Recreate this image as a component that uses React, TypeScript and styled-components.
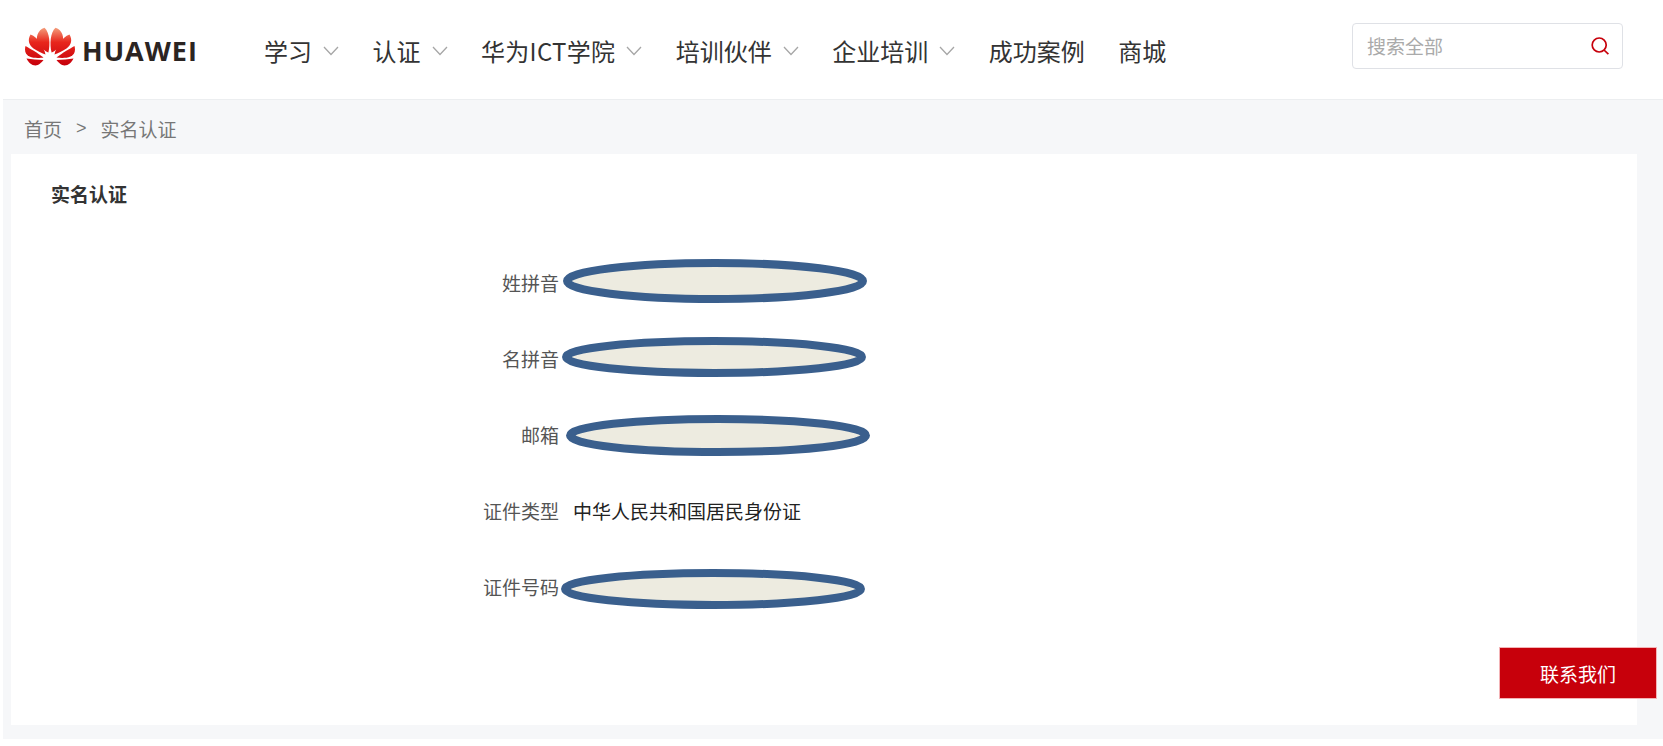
import styled, { createGlobalStyle } from "styled-components";

const GlobalStyle = createGlobalStyle`
  html, body {
    margin: 0;
    padding: 0;
    background: #fff;
    font-family: "Noto Sans CJK SC", "Liberation Sans", sans-serif;
  }
  * { box-sizing: border-box; }
`;

const navItems = [
  { label: "学习", arrow: true },
  { label: "认证", arrow: true },
  { label: "华为ICT学院", arrow: true, spacing: 0.3 },
  { label: "培训伙伴", arrow: true },
  { label: "企业培训", arrow: true },
  { label: "成功案例", arrow: false },
  { label: "商城", arrow: false },
];

const formRows = [
  { label: "姓拼音", blot: { left: 552, top: 15, width: 304, height: 44 } },
  { label: "名拼音", blot: { left: 551, top: 17, width: 304, height: 40 } },
  { label: "邮箱", blot: { left: 555, top: 19, width: 304, height: 41 } },
  { label: "证件类型", value: "中华人民共和国居民身份证" },
  { label: "证件号码", blot: { left: 550, top: 21, width: 304, height: 40 } },
];

const petals = [
  "M26.6 25.5C24.6 17 25.2 5.5 30.5 0.8C37.5 3 39.5 11 37.2 15.5C35.2 19.6 29.5 24.6 26.6 25.5Z",
  "M29.5 27.5C31 20 37 10 44.5 7.5C47.5 12.5 46.5 18 41.5 21.5C38 24 32.5 26.5 29.5 27.5Z",
  "M31.5 30.5C38 25.5 45 21.5 49.5 19C50.8 24 49.5 27.5 45.5 29.5C41 31.5 35 31 31.5 30.5Z",
  "M31.5 33C37 32.5 43.5 32.5 48.5 31.5C46.5 35.5 43.5 38.5 39.5 38.5C36.5 38.5 33.5 35.5 31.5 33Z",
];

function Logo() {
  return (
    <LogoMark width="50" height="39" viewBox="0 0 50 39">
      <defs>
        <linearGradient id="petal" gradientUnits="userSpaceOnUse" x1="0" y1="38" x2="0" y2="0">
          <stop offset="0" stopColor="#c7000b" />
          <stop offset="0.6" stopColor="#e8261c" />
          <stop offset="1" stopColor="#f4a37f" />
        </linearGradient>
      </defs>
      {petals.map((d) => (
        <path key={d} d={d} fill="url(#petal)" />
      ))}
      <g transform="translate(50 0) scale(-1 1)">
        {petals.map((d) => (
          <path key={d} d={d} fill="url(#petal)" />
        ))}
      </g>
    </LogoMark>
  );
}

function Chevron() {
  return (
    <svg width="16" height="10" viewBox="0 0 16 10">
      <path d="M1 1L8 8.5L15 1" fill="none" stroke="#a6a6a6" strokeWidth="1.3" />
    </svg>
  );
}

function SearchIcon() {
  return (
    <svg width="20" height="20" viewBox="0 0 20 20">
      <circle cx="9.2" cy="9" r="7" fill="none" stroke="#c7000b" strokeWidth="1.7" />
      <path d="M14 14L18.4 18.2" fill="none" stroke="#c7000b" strokeWidth="1.7" />
    </svg>
  );
}

export default function App() {
  return (
    <>
      <GlobalStyle />
      <Page>
        <Header>
          <Brand>
            <Logo />
            <BrandName>HUAWEI</BrandName>
          </Brand>
          <Nav>
            {navItems.map((item) => (
              <NavItem key={item.label} $spacing={item.spacing ?? 0}>
                {item.label}
                {item.arrow && <Chevron />}
              </NavItem>
            ))}
          </Nav>
          <SearchBox>
            <SearchText>搜索全部</SearchText>
            <SearchIcon />
          </SearchBox>
        </Header>
        <Content>
          <Breadcrumb>
            <span>首页</span>
            <Separator>&gt;</Separator>
            <span>实名认证</span>
          </Breadcrumb>
          <Card>
            <CardTitle>实名认证</CardTitle>
            <Form>
              {formRows.map((row) => (
                <Row key={row.label}>
                  <Label>{row.label}</Label>
                  {row.value && <Value>{row.value}</Value>}
                  {row.blot && (
                    <Blot
                      $left={row.blot.left}
                      $top={row.blot.top}
                      width={row.blot.width}
                      height={row.blot.height}
                      viewBox={`0 0 ${row.blot.width} ${row.blot.height}`}
                    >
                      <ellipse
                        cx={row.blot.width / 2}
                        cy={row.blot.height / 2}
                        rx={row.blot.width / 2 - 4}
                        ry={row.blot.height / 2 - 4}
                        fill="#edebe0"
                        stroke="#3a5f8d"
                        strokeWidth="8"
                      />
                    </Blot>
                  )}
                </Row>
              ))}
            </Form>
          </Card>
        </Content>
        <ContactButton>联系我们</ContactButton>
      </Page>
    </>
  );
}

const Page = styled.div`
  position: relative;
  width: 1663px;
  height: 746px;
  padding: 0 0 7px 3px;
  overflow: hidden;
`;

const Header = styled.header`
  display: flex;
  align-items: center;
  height: 100px;
  padding: 0 40px 0 22px;
  border-bottom: 1px solid #eceef0;
`;

const Brand = styled.div`
  display: flex;
  align-items: center;
  gap: 7px;
  width: 239px;
`;

const LogoMark = styled.svg`
  margin-bottom: 6px;
`;

const BrandName = styled.span`
  margin-top: 2px;
  font-family: "Open Sans", "Liberation Sans", sans-serif;
  font-size: 27px;
  font-weight: 700;
  line-height: 1;
  letter-spacing: 1px;
  color: #2b2422;
`;

const Nav = styled.nav`
  display: flex;
  align-items: center;
  gap: 33.5px;
  flex: 1;
  margin-top: 2px;
`;

const NavItem = styled.div<{ $spacing: number }>`
  display: flex;
  align-items: center;
  gap: 11px;
  font-size: 24px;
  line-height: 32px;
  letter-spacing: ${(props) => props.$spacing}px;
  color: #333;
`;

const SearchBox = styled.div`
  display: flex;
  align-items: center;
  justify-content: space-between;
  width: 271px;
  height: 46px;
  margin-bottom: 8px;
  padding: 0 12px 0 14px;
  border: 1px solid #dfe1e6;
  border-radius: 4px;
`;

const SearchText = styled.span`
  font-size: 19px;
  color: #aaa;
`;

const Content = styled.main`
  height: 639px;
  padding: 0 26px 14px 8px;
  background: #f6f7f9;
`;

const Breadcrumb = styled.div`
  display: flex;
  align-items: center;
  height: 54px;
  padding: 2px 0 0 13px;
  font-size: 19px;
  color: #777;
`;

const Separator = styled.span`
  margin: 0 14px;
  font-family: "Liberation Sans", sans-serif;
  font-size: 18px;
`;

const Card = styled.section`
  height: 571px;
  padding: 26px 40px 0;
  background: #fff;
`;

const CardTitle = styled.h2`
  margin: 0;
  font-size: 19px;
  font-weight: 700;
  line-height: 28px;
  color: #333;
`;

const Form = styled.div`
  margin: 36px 0 0 -40px;
`;

const Row = styled.div`
  position: relative;
  display: flex;
  align-items: center;
  height: 76px;
`;

const Label = styled.span`
  width: 548px;
  font-size: 19px;
  text-align: right;
  color: #555;
`;

const Value = styled.span`
  margin-left: 14px;
  font-size: 19px;
  color: #222;
`;

const Blot = styled.svg<{ $left: number; $top: number }>`
  position: absolute;
  left: ${(props) => props.$left}px;
  top: ${(props) => props.$top}px;
`;

const ContactButton = styled.button`
  position: absolute;
  top: 647px;
  left: 1499px;
  width: 158px;
  height: 52px;
  padding: 0;
  border: 1px solid #f3b3b6;
  background: #c7000b;
  font-family: inherit;
  font-size: 19px;
  color: #fff;
`;
